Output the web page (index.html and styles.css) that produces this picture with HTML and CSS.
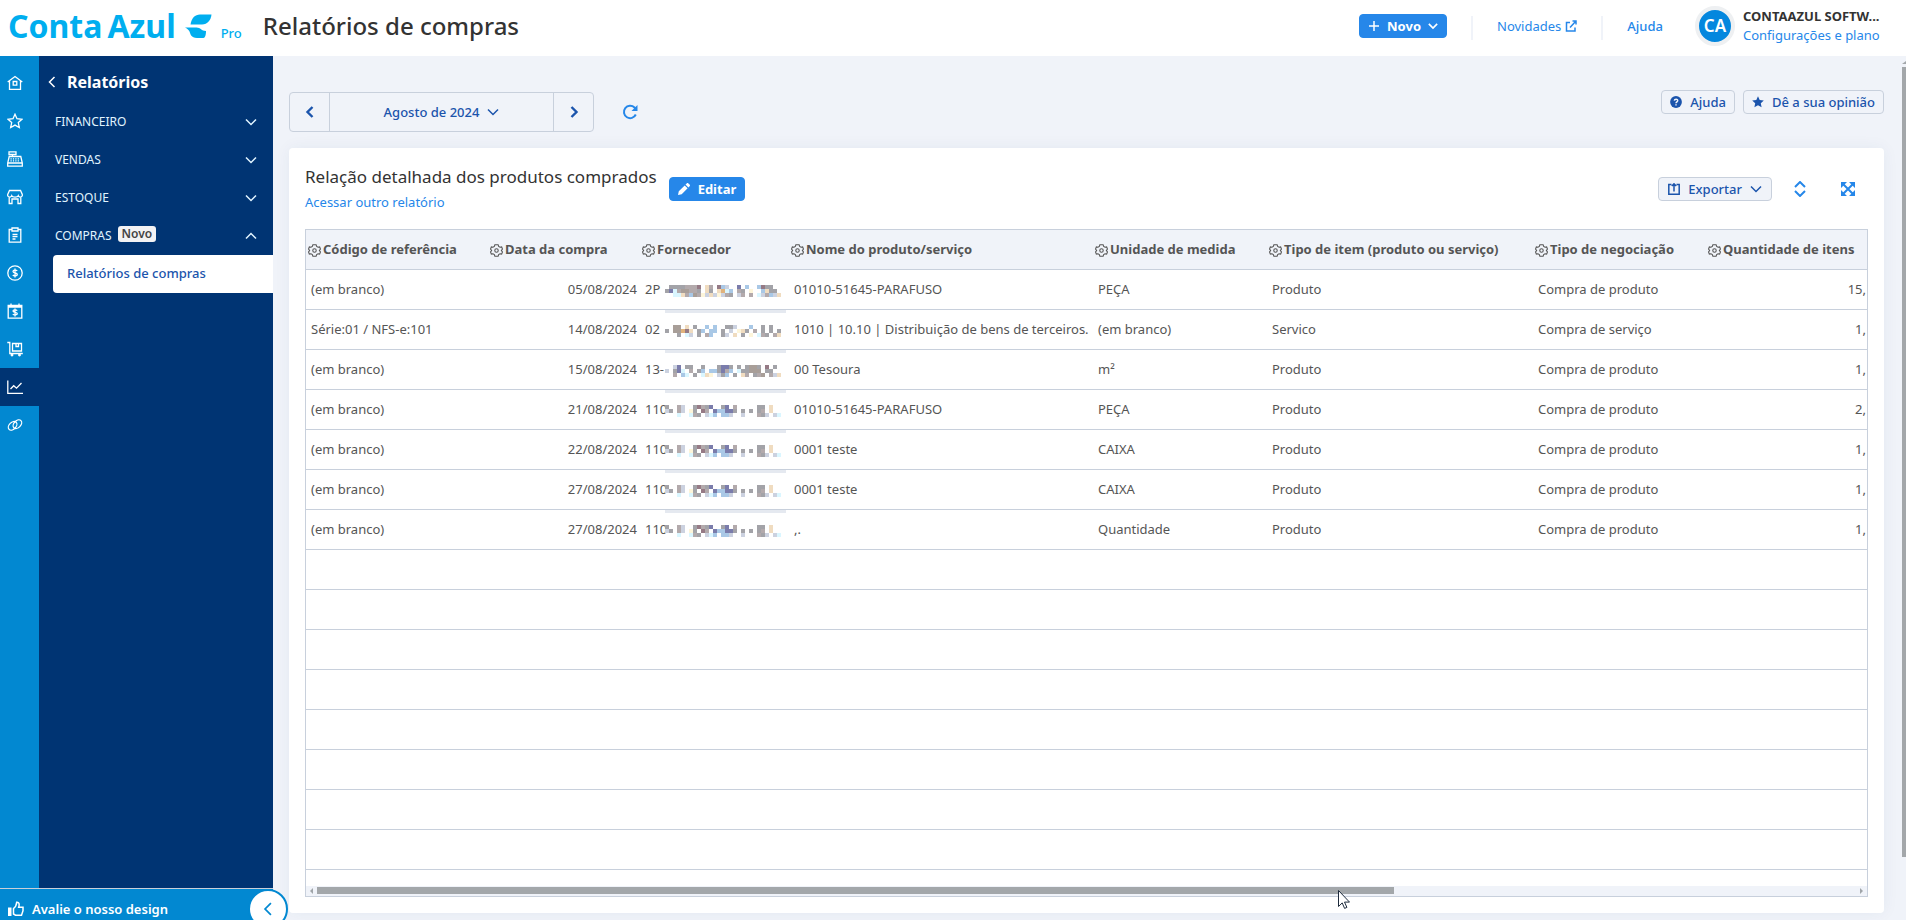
FILE: index.html
```html
<!DOCTYPE html>
<html lang="pt-BR">
  <head>
    <meta charset="utf-8" />
    <title>Relatórios de compras</title>
    <link rel="stylesheet" href="styles.css" />
  </head>
  <body>
    <svg class="symbols" aria-hidden="true">
      <symbol id="gear" viewBox="0 0 24 24">
        <path d="M9 1.500h6l1 3 2.500 1.400 3-.6 1.500 4.200-2 2.500 2 2.500-1.500 4.200-3-.6L16 19.500l-1 3H9l-1-3-2.500-1.400-3 .6L1 14.500 3 12 1 9.500l1.500-4.200 3 .6L8 4.500z" />
        <circle cx="12" cy="12" r="3.200" />
      </symbol>
      <symbol id="down" viewBox="0 0 12 12"><path d="M1 3.500l5 5 5-5" /></symbol>
      <symbol id="up" viewBox="0 0 12 12"><path d="M1 8.500l5-5 5 5" /></symbol>
      <symbol id="left" viewBox="0 0 12 12"><path d="M8.500 1l-5 5 5 5" /></symbol>
      <symbol id="right" viewBox="0 0 12 12"><path d="M3.500 1l5 5-5 5" /></symbol>
    </svg>

    <header class="topbar">
      <a class="logo" href="#">
        <span class="logo-name">Conta</span>
        <span class="logo-name">Azul</span>
        <svg class="leaf" viewBox="0 0 27 25">
          <path d="M5.500 10.500C6.500 4 10 .5 15 .5h11.500c-.5 5.500-4 10-9.500 10z" />
          <path d="M0 13.500h11.500c4 0 5 3.500 9.500 3.500 0 4-1 7-2.500 7H12c-6 0-6.500-4-7.500-6.500C3.500 15.500 2 14.500 0 13.500z" />
        </svg>
        <span class="logo-plan">Pro</span>
      </a>
      <h1>Relatórios de compras</h1>
      <button class="btn primary new">
        <svg class="ico" viewBox="0 0 12 12"><path d="M6 1v10M1 6h10" /></svg>
        Novo
        <svg class="ico small"><use href="#down" /></svg>
      </button>
      <span class="sep"></span>
      <a class="news" href="#">Novidades
        <svg class="ico" viewBox="0 0 12 12"><path d="M5 2.500H1.500v8.500H10V7.500M7.500 1H11v3.500M11 1L5 7.500" /></svg>
      </a>
      <span class="sep"></span>
      <a class="help" href="#">Ajuda</a>
      <div class="account">
        <span class="avatar">CA</span>
        <div class="account-text">
          <strong>CONTAAZUL SOFTW...</strong>
          <a href="#">Configurações e plano</a>
        </div>
      </div>
    </header>

    <div class="shell">
      <aside class="side">
        <div class="side-body">
          <nav class="rail">
            <a href="#" aria-label="Início"><svg viewBox="0 0 16 16"><path d="M.7 7L8 1.500 15.300 7M2.500 6v8.300h11V6" /><path d="M6.200 6.500h3.600v3.600H6.200z" /></svg></a>
            <a href="#" aria-label="Favoritos"><svg viewBox="0 0 16 16"><path d="M8 1.200l2 4.500 5 .6-3.700 3.300 1 4.900L8 12.100l-4.300 2.400 1-4.900L1 6.300l5-.6z" /></svg></a>
            <a href="#" aria-label="Vendas"><svg viewBox="0 0 16 16"><path d="M2 .8h7v2.700H2zM5.500 3.500v2M2.200 5.500h11.600l1.500 6.500v3.200H.7V12zM.7 12h14.600" /><path d="M3.500 7.800h9M3.500 9.800h9" stroke-dasharray="1.200 1.200" /></svg></a>
            <a href="#" aria-label="Loja"><svg viewBox="0 0 16 16"><path d="M2.500 1.500h11l1.800 4v1.200c-.8 1.800-3.200 1.800-4 0-.8 1.800-5.800 1.800-6.600 0-.8 1.800-3.200 1.800-4 0V5.500zM2.200 8v6.500H5V10h6v4.500h2.800V8" /></svg></a>
            <a href="#" aria-label="Pedidos"><svg viewBox="0 0 16 16"><path d="M5 2.500H2.200v12.700h11.600V2.500H11M5 1h6v3H5zM5.500 7.500h5M5.500 9.700h5M5.500 12h3" /></svg></a>
            <a href="#" aria-label="Financeiro"><svg viewBox="0 0 16 16"><circle cx="8" cy="8" r="7.200" /><path d="M10.200 5.800c-.8-1-4.200-1-4.200.7 0 1.900 4.300 1.100 4.300 3 0 1.700-3.600 1.700-4.500.5M8 3.500v9" /></svg></a>
            <a href="#" aria-label="Contas"><svg viewBox="0 0 16 16"><path d="M1.200 2.500h13.600v12.700H1.200zM1.200 4h13.600M4 .5v3M12 .5v3" /><path d="M10.200 7.600c-.8-1-4.200-1-4.200.5 0 1.700 4.300 1 4.300 2.700 0 1.500-3.600 1.500-4.500.4M8 5.500v8" /></svg></a>
            <a href="#" aria-label="Compras"><svg viewBox="0 0 16 16"><path d="M.3 1.500h2.500v11h13M5.500 2.500h9v7.500h-9zM9 2.500v3h2.500v-3" /><circle cx="5" cy="14" r=".8" /><circle cx="12.500" cy="14" r=".8" /></svg></a>
            <a class="on" href="#" aria-label="Relatórios"><svg viewBox="0 0 16 16"><path d="M.8 1.500v12.800H16M3.500 10l3.200-3.300 2.800 2.500L14.500 4" /></svg></a>
            <a href="#" aria-label="Integrações"><svg viewBox="0 0 16 16"><ellipse cx="5.600" cy="8.800" rx="5" ry="3.400" transform="rotate(-45 5.600 8.800)" /><ellipse cx="10.400" cy="7.200" rx="5" ry="3.400" transform="rotate(-45 10.400 7.200)" /></svg></a>
          </nav>
          <nav class="menu">
            <button class="menu-title"><svg class="ico"><use href="#left" /></svg>Relatórios</button>
            <button class="group">FINANCEIRO<svg class="ico"><use href="#down" /></svg></button>
            <button class="group">VENDAS<svg class="ico"><use href="#down" /></svg></button>
            <button class="group">ESTOQUE<svg class="ico"><use href="#down" /></svg></button>
            <button class="group">COMPRAS<span class="badge">Novo</span><svg class="ico"><use href="#up" /></svg></button>
            <a class="current" href="#">Relatórios de compras</a>
          </nav>
        </div>
        <div class="rate">
          <a href="#">
            <svg class="ico" viewBox="0 0 16 16"><path d="M0 6.500h3.500V15H0z" class="solid" /><path d="M5.500 7.500c2-1.500 3-3.500 3.200-6.300 2.500-.3 3 2 2 5h4.300v3.500l-1.500 4.500H7.500l-2-1.200z" /></svg>
            Avalie o nosso design
          </a>
          <button class="collapse" aria-label="Recolher menu"><svg class="ico"><use href="#left" /></svg></button>
        </div>
      </aside>

      <main>
        <div class="filters">
          <div class="period">
            <button aria-label="Mês anterior"><svg class="ico bold"><use href="#left" /></svg></button>
            <button class="month">Agosto de 2024 <svg class="ico"><use href="#down" /></svg></button>
            <button aria-label="Próximo mês"><svg class="ico bold"><use href="#right" /></svg></button>
          </div>
          <button class="plain refresh" aria-label="Atualizar">
            <svg class="ico" viewBox="0 0 16 16"><path d="M13.800 10.500A6.200 6.200 0 1 1 12.500 3.500L14 5" /><path class="solid" d="M15.500 1v6h-6z" /></svg>
          </button>
          <div class="filters-right">
            <button class="btn">
              <svg class="ico" viewBox="0 0 12 12"><circle class="solid" cx="6" cy="6" r="5.900" /><path class="cut" d="M4.300 4.600c.2-2 3.500-1.900 3.400 0C7.700 5.800 6 5.800 6 7.200M6 8.200v1.300" /></svg>
              Ajuda
            </button>
            <button class="btn">
              <svg class="ico" viewBox="0 0 12 12"><path class="solid" d="M6 .2l1.700 3.700 4.100.5-3 2.800.8 4.100L6 9.300l-3.600 2 .8-4.100-3-2.800 4.100-.5z" /></svg>
              Dê a sua opinião
            </button>
          </div>
        </div>

        <section class="card">
          <div class="card-head">
            <div>
              <h2>Relação detalhada dos produtos comprados</h2>
              <a href="#">Acessar outro relatório</a>
            </div>
            <button class="btn primary">
              <svg class="ico" viewBox="0 0 12 12"><path class="solid" d="M0 12l.8-3.700 5.900-5.900 2.900 2.900-5.900 5.900zM7.500 1.600L8.700.4c.5-.5 1.200-.5 1.700 0l1.200 1.200c.5.500.5 1.200 0 1.700l-1.200 1.200z" /></svg>
              Editar
            </button>
            <div class="card-tools">
              <button class="btn export">
                <svg class="ico" viewBox="0 0 12 12"><path d="M3.500 1.500H.8v9.800h10.400V1.500H8.500M6 8.500V1M3.800 3L6 .8 8.200 3" /></svg>
                Exportar
                <svg class="ico"><use href="#down" /></svg>
              </button>
              <button class="plain" aria-label="Ordenar"><svg class="ico" viewBox="0 0 16 16"><path d="M3 6l5-5 5 5M3 10l5 5 5-5" /></svg></button>
              <button class="plain" aria-label="Tela cheia"><svg class="ico" viewBox="0 0 16 16"><path d="M3 3l10 10M13 3L3 13" /><path class="solid" d="M1 1h6L1 7zM15 1v6L9 1zM1 15V9l6 6zM15 15H9l6-6z" /></svg></button>
            </div>
          </div>

          <div class="grid">
            <table>
              <colgroup>
                <col class="c-code" /><col class="c-date" /><col class="c-supplier" /><col class="c-name" />
                <col class="c-unit" /><col class="c-item" /><col class="c-deal" /><col />
              </colgroup>
              <thead>
                <tr>
                  <th><svg><use href="#gear" /></svg>Código de referência</th>
                  <th><svg><use href="#gear" /></svg>Data da compra</th>
                  <th><svg><use href="#gear" /></svg>Fornecedor</th>
                  <th><svg><use href="#gear" /></svg>Nome do produto/serviço</th>
                  <th><svg><use href="#gear" /></svg>Unidade de medida</th>
                  <th><svg><use href="#gear" /></svg>Tipo de item (produto ou serviço)</th>
                  <th><svg><use href="#gear" /></svg>Tipo de negociação</th>
                  <th><svg><use href="#gear" /></svg>Quantidade de itens</th>
                </tr>
              </thead>
              <tbody>
                <tr>
                  <td>(em branco)</td><td class="num">05/08/2024</td><td class="masked" data-mask="0">2P</td>
                  <td>01010-51645-PARAFUSO</td><td>PEÇA</td><td>Produto</td><td>Compra de produto</td><td class="qty">15,</td>
                </tr>
                <tr>
                  <td>Série:01 / NFS-e:101</td><td class="num">14/08/2024</td><td class="masked" data-mask="1">02</td>
                  <td>1010 | 10.10 | Distribuição de bens de terceiros.</td><td>(em branco)</td><td>Servico</td><td>Compra de serviço</td><td class="qty">1,</td>
                </tr>
                <tr>
                  <td>(em branco)</td><td class="num">15/08/2024</td><td class="masked" data-mask="2">13-</td>
                  <td>00 Tesoura</td><td>m²</td><td>Produto</td><td>Compra de produto</td><td class="qty">1,</td>
                </tr>
                <tr>
                  <td>(em branco)</td><td class="num">21/08/2024</td><td class="masked" data-mask="3">110</td>
                  <td>01010-51645-PARAFUSO</td><td>PEÇA</td><td>Produto</td><td>Compra de produto</td><td class="qty">2,</td>
                </tr>
                <tr>
                  <td>(em branco)</td><td class="num">22/08/2024</td><td class="masked" data-mask="3">110</td>
                  <td>0001 teste</td><td>CAIXA</td><td>Produto</td><td>Compra de produto</td><td class="qty">1,</td>
                </tr>
                <tr>
                  <td>(em branco)</td><td class="num">27/08/2024</td><td class="masked" data-mask="3">110</td>
                  <td>0001 teste</td><td>CAIXA</td><td>Produto</td><td>Compra de produto</td><td class="qty">1,</td>
                </tr>
                <tr>
                  <td>(em branco)</td><td class="num">27/08/2024</td><td class="masked" data-mask="3">110</td>
                  <td>,.</td><td>Quantidade</td><td>Produto</td><td>Compra de produto</td><td class="qty">1,</td>
                </tr>
                <tr><td colspan="8"></td></tr>
                <tr><td colspan="8"></td></tr>
                <tr><td colspan="8"></td></tr>
                <tr><td colspan="8"></td></tr>
                <tr><td colspan="8"></td></tr>
                <tr><td colspan="8"></td></tr>
                <tr><td colspan="8"></td></tr>
                <tr><td colspan="8"></td></tr>
              </tbody>
            </table>
            <div class="hscroll">
              <svg viewBox="0 0 11 10"><path d="M7 2v6L4 5z" /></svg>
              <div class="track">
                <div class="thumb">
                  <svg class="pointer" viewBox="0 0 12 19"><path d="M.5.500v16l3.700-3.600 2.400 5.500 2.300-1-2.400-5.300h5z" /></svg>
                </div>
              </div>
              <svg viewBox="0 0 11 10"><path d="M4 2v6l3-3z" /></svg>
            </div>
          </div>
        </section>
      </main>
      <div class="vscroll">
        <svg viewBox="0 0 4 3"><path d="M4 0v3H0z" /></svg>
        <div class="thumb"></div>
      </div>
    </div>
    <script src="script.js"></script>
  </body>
</html>
```
FILE: styles.css
```css
* {
  box-sizing: border-box;
}
body {
  margin: 0;
  height: 100vh;
  display: flex;
  flex-direction: column;
  overflow: hidden;
  background: #f0f3f9;
  color: #333;
  font-family: "Noto Sans", sans-serif;
  font-size: 13px;
  line-height: 20px;
}
a {
  color: #2687e9;
  text-decoration: none;
}
button {
  border: none;
  background: none;
  padding: 0;
  color: inherit;
  font: inherit;
  cursor: pointer;
}
.symbols {
  display: none;
}
svg {
  flex: none;
  fill: none;
  stroke: currentColor;
}
.ico {
  width: 12px;
  height: 12px;
  stroke-width: 1.5;
}
.ico.bold {
  stroke-width: 2.4;
}
.ico.small {
  width: 10px;
  height: 10px;
  stroke-width: 2;
}
.solid {
  fill: currentColor;
  stroke: none;
}
.cut {
  stroke: #f0f3f9;
}

/* buttons */
.btn {
  display: flex;
  align-items: center;
  gap: 8px;
  height: 24px;
  padding: 0 8px;
  border: 1px solid #c8d0dc;
  border-radius: 4px;
  background: #f0f3f9;
  color: #1b54ac;
  font-weight: 500;
  white-space: nowrap;
}
.btn.primary {
  border-color: #2687e9;
  background: #2687e9;
  color: #fff;
  font-weight: 700;
}
.plain {
  display: flex;
  color: #2687e9;
}
.plain .ico {
  width: 16px;
  height: 16px;
  stroke-width: 2;
}

/* top bar */
.topbar {
  display: flex;
  align-items: center;
  flex: none;
  height: 56px;
  padding: 0 22px 4px 8px;
  background: #fff;
}
.logo {
  display: flex;
  align-items: center;
  gap: 5px;
  color: #00aeef;
}
.logo-name {
  font-size: 32px;
  font-weight: 700;
}
.leaf {
  width: 27px;
  height: 25px;
  margin-left: 4px;
  fill: currentColor;
  stroke: none;
}
.logo-plan {
  align-self: flex-end;
  margin: 12px 0 0 4px;
  font-weight: 500;
  line-height: 12px;
}
h1 {
  margin: 0 auto 0 21px;
  font-size: 24px;
  font-weight: 500;
  line-height: 32px;
}
.btn.new {
  gap: 7px;
}
.sep {
  width: 2px;
  height: 24px;
  margin: 4px 24px 0;
  background: #f0f3f9;
}
.news {
  display: flex;
  align-items: center;
  gap: 4px;
}
.help {
  font-weight: 500;
}
.account {
  display: flex;
  align-items: center;
  gap: 8px;
  margin-left: 32px;
}
.account-text {
  width: 141px;
}
.avatar {
  display: flex;
  align-items: center;
  justify-content: center;
  width: 40px;
  height: 40px;
  border: 4px solid #eef0f2;
  border-radius: 50%;
  background: #0487de;
  color: #fff;
  font-size: 17px;
  font-weight: 600;
}
.account strong,
.account a {
  display: block;
  line-height: 19px;
  white-space: nowrap;
}
.account strong {
  font-weight: 700;
}

/* side menu */
.shell {
  display: flex;
  flex: 1;
  min-height: 0;
}
.side {
  display: flex;
  flex-direction: column;
  flex: none;
  width: 273px;
  color: #fff;
}
.side-body {
  display: flex;
  flex: 1;
}
.rail {
  width: 39px;
  padding-top: 8px;
  background: #0288d1;
}
.rail a {
  display: flex;
  align-items: center;
  height: 38px;
  padding-left: 7px;
  color: #fff;
}
.rail a.on {
  background: #003473;
}
.rail svg {
  width: 16px;
  height: 16px;
  stroke-width: 1.3;
}
.menu {
  flex: 1;
  padding-top: 8px;
  background: #003473;
}
.menu-title {
  display: flex;
  align-items: center;
  gap: 9px;
  height: 36px;
  padding-left: 7px;
  font-size: 16px;
  font-weight: 700;
}
.group {
  display: flex;
  align-items: center;
  width: 100%;
  height: 38px;
  padding: 6px 16px 0;
  font-size: 12px;
  color: #e0f4ff;
}
.group .ico {
  margin-left: auto;
}
.badge {
  margin: 0 0 4px 6px;
  padding: 0 4px;
  border-radius: 3px;
  background: #f2f2f4;
  color: #444;
  font-weight: 600;
  line-height: 16px;
}
.current {
  display: flex;
  align-items: center;
  height: 38px;
  margin: 3px 0 0 14px;
  padding: 0 0 2px 14px;
  border-radius: 4px 0 0 4px;
  background: #fff;
  color: #1b54ac;
  font-weight: 500;
}
.rate {
  position: relative;
  height: 32px;
  padding-top: 10px;
  border-top: 1px solid #c9cfd8;
  background: #0288d1;
}
.rate a {
  display: flex;
  align-items: center;
  gap: 8px;
  padding-left: 8px;
  color: #fff;
  font-weight: 600;
}
.rate .ico {
  width: 16px;
  height: 16px;
}
.collapse {
  position: absolute;
  top: 0;
  right: -15px;
  display: flex;
  align-items: center;
  justify-content: center;
  width: 40px;
  height: 40px;
  border: 2px solid #0288d1;
  border-radius: 50%;
  background: #fff;
  color: #0288d1;
}
.rate .collapse .ico {
  width: 14px;
  height: 14px;
}

/* content */
main {
  flex: 1;
  min-width: 0;
  padding: 34px 18px 0 16px;
}
.filters {
  display: flex;
  align-items: flex-start;
}
.period {
  display: flex;
  height: 40px;
  margin: 2px 28px 16px 0;
  border: 1px solid #c8d0dc;
  border-radius: 4px;
  color: #1b54ac;
}
.period button {
  display: flex;
  align-items: center;
  justify-content: center;
  gap: 8px;
  width: 39px;
  font-weight: 500;
}
.period .month {
  width: 225px;
  border: solid #c8d0dc;
  border-width: 0 1px;
}
.refresh {
  margin-top: 14px;
}
.filters-right {
  display: flex;
  gap: 8px;
  margin-left: auto;
}
.card {
  padding: 16px;
  border-radius: 4px;
  background: #fff;
  box-shadow: 0 0 16px rgba(30, 60, 120, 0.06);
}
.card-head {
  display: flex;
  align-items: center;
  gap: 12px;
  margin-bottom: 15px;
}
.card-head a {
  line-height: 24px;
}
h2 {
  margin: 0;
  font-size: 17px;
  font-weight: 400;
  line-height: 26px;
}
.card-tools {
  display: flex;
  align-items: center;
  gap: 32px;
  margin: 0 12px 0 auto;
}
.card-tools .export {
  margin-right: -12px;
  padding: 0 9px;
}

/* report table */
.grid {
  border: 1px solid #c8d0dc;
}
table {
  width: 100%;
  table-layout: fixed;
  border-spacing: 0;
  margin-bottom: 16px;
  color: #555;
}
.c-code {
  width: 182px;
}
.c-date {
  width: 152px;
}
.c-supplier {
  width: 149px;
}
.c-name {
  width: 304px;
}
.c-unit {
  width: 174px;
}
.c-item {
  width: 266px;
}
.c-deal {
  width: 173px;
}
th,
td {
  height: 40px;
  padding: 0 0 2px 5px;
  border-bottom: 1px solid #c8d0dc;
  text-align: left;
  white-space: nowrap;
}
th {
  padding-left: 2px;
  background: #f0f3f9;
  font-weight: 700;
}
th svg {
  width: 13px;
  height: 13px;
  margin-right: 2px;
  vertical-align: -3px;
  stroke-width: 2;
}
td.num {
  padding-right: 3px;
  text-align: right;
}
td.qty {
  padding-right: 1px;
  text-align: right;
}
.masked {
  position: relative;
}
.mosaic {
  position: absolute;
  top: 0;
  left: 25px;
  width: 121px;
  height: 38px;
  stroke: none;
}
.hscroll {
  display: flex;
  height: 10px;
  background: #f0f3f9;
}
.hscroll > svg {
  width: 11px;
  height: 10px;
  fill: #a0a5a9;
  stroke: none;
}
.track {
  flex: 1;
}
.hscroll .thumb {
  position: relative;
  width: 70%;
  height: 7px;
  margin-top: 1px;
  background: #a3a7aa;
}
.pointer {
  position: absolute;
  top: 3px;
  right: 44px;
  width: 12px;
  height: 19px;
  fill: #fff;
  stroke: #1d2a3c;
}
.vscroll {
  width: 4px;
  padding-top: 5px;
}
.vscroll svg {
  display: block;
  width: 4px;
  height: 3px;
  margin-bottom: 3px;
  fill: #a3a7aa;
  stroke: none;
}
.vscroll .thumb {
  height: 92%;
  background: #a3a7aa;
}
```
FILE: script.js
```javascript
// hides supplier names behind a coarse pixel pattern
const colors = {
  g: "#a3a3a8", t: "#a89e98", p: "#957a85", n: "#7a7cab", b: "#a9c8e6",
  l: "#ccd2e0", o: "#f0dcc0", y: "#fdf5da", c: "#daf6ff", k: "#b3aaac", r: "#e0b27c",
};
const masks = [
  [".ggggkkkp.ok.pbl..n.b..bpgg..", "gnckttkkg.og.orcb.kg.y..bogg.", "..ccokbtkylolylkg.lk.k.clkblo"],
  ["..tt.o.g..b.b..ggl...b..g.g..", "g.ttrpo.gb.bb.g.l.yog.k.g.g.g", "...g.cl.g.kb..gl.o.g.y.ckg.ko"],
  ["..ln.gg..g...gnng.g.gttg.p.g.", "l.gnc.k.gb.bbgnkb.cggttt.gg..", "..k.bc.g.coy.lgb.g.ok.gkt.klo"],
  ["g..kl..gpkgn..gn.k.....gg.o..", "lg.kl.yg.pk.nbbnng.g.g.gk.o..", "...c..ckg.lcb.bbl..l...kgl.lc"],
];

document.querySelectorAll(".masked").forEach((cell, row) => {
  let rects = "";
  if (row > 0) {
    rects += '<rect width="121" height="3" fill="#e5e9f0"/>';
  }
  masks[cell.dataset.mask].forEach((line, y) => {
    [...line].forEach((key, x) => {
      if (colors[key]) {
        rects += `<rect x="${x * 4}" y="${15 + y * 4}" width="4" height="4" fill="${colors[key]}"/>`;
      }
    });
  });
  cell.insertAdjacentHTML("beforeend", `<svg class="mosaic" viewBox="0 0 121 38">${rects}</svg>`);
});
```
